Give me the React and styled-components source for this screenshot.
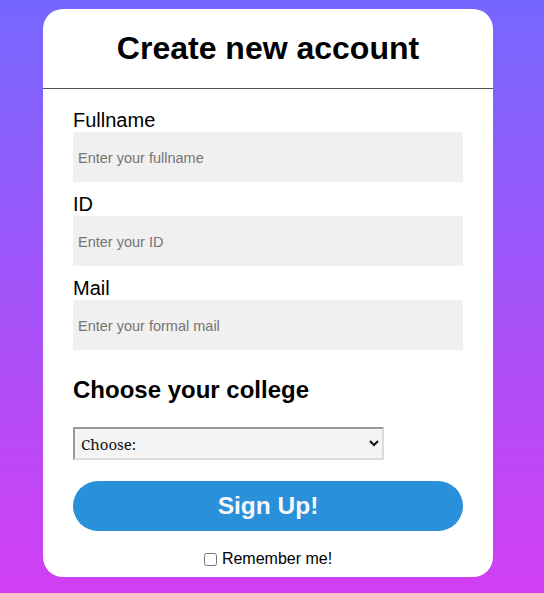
import React from "react";
import styled, { createGlobalStyle } from "styled-components";

const GlobalStyle = createGlobalStyle`
  html, body {
    margin: 0;
    padding: 0;
    min-height: 100%;
  }
  body {
    font-family: "Liberation Sans", Arial, sans-serif;
    background: linear-gradient(180deg, #7567fe 0%, #d23ff3 100%);
    background-attachment: fixed;
    min-height: 100vh;
  }
`;

const Page = styled.div`
  min-height: 100vh;
  display: flex;
  justify-content: center;
  align-items: flex-start;
  padding: 9px 8px 0 0;
  box-sizing: border-box;
`;

const Card = styled.div`
  width: 450px;
  background: #fff;
  border-radius: 20px;
  overflow: hidden;
`;

const Header = styled.div`
  padding: 21px 0;
  border-bottom: 1px solid #555;
  text-align: center;
`;

const Title = styled.h1`
  margin: 0;
  font-size: 32px;
  font-weight: bold;
  line-height: 37px;
  color: #000;
`;

const Form = styled.form`
  padding: 20px 30px 9px;
  display: flex;
  flex-direction: column;
`;

const Field = styled.div`
  display: flex;
  flex-direction: column;
  margin-bottom: ${(p) => p.$gap || 11}px;
`;

const Label = styled.label`
  font-size: 20px;
  line-height: 23px;
  color: #000;
`;

const Input = styled.input`
  height: 50px;
  box-sizing: border-box;
  border: none;
  outline: none;
  background: #f0f0f0;
  padding: 2px 5px 0;
  font-family: "Liberation Sans", Arial, sans-serif;
  font-size: 14.5px;
  color: #222;
  &::placeholder {
    color: #757575;
  }
`;

const Subtitle = styled.h2`
  margin: 15px 0 23px;
  font-size: 24px;
  font-weight: bold;
  line-height: 28px;
  color: #000;
`;

const Select = styled.select`
  width: 311px;
  height: 33px;
  box-sizing: border-box;
  border-style: solid;
  border-width: 2px;
  border-color: #9a9a9a #dcdcdc #dcdcdc #9a9a9a;
  background: #f4f4f4;
  padding: 0 2px;
  font-family: "Noto Serif", "DejaVu Serif", serif;
  font-size: 15px;
  color: #111;
  margin-bottom: 21px;
`;

const SubmitButton = styled.button`
  height: 50px;
  border: none;
  border-radius: 25px;
  background: #2a90da;
  color: #f4f8fc;
  font-family: "Liberation Sans", Arial, sans-serif;
  font-size: 24.5px;
  font-weight: bold;
  cursor: pointer;
  margin-bottom: 19px;
`;

const Remember = styled.label`
  display: flex;
  justify-content: center;
  align-items: center;
  font-size: 16px;
  line-height: 18px;
  color: #000;
`;

const Check = styled.input`
  width: 13px;
  height: 13px;
  margin: 0 5px 0 0;
`;

export default function App() {
  return (
    <>
      <GlobalStyle />
      <Page>
        <Card>
          <Header>
            <Title>Create new account</Title>
          </Header>
          <Form onSubmit={(e) => e.preventDefault()}>
            <Field>
              <Label htmlFor="fullname">Fullname</Label>
              <Input id="fullname" type="text" placeholder="Enter your fullname" />
            </Field>
            <Field>
              <Label htmlFor="uid">ID</Label>
              <Input id="uid" type="text" placeholder="Enter your ID" />
            </Field>
            <Field $gap={0}>
              <Label htmlFor="mail">Mail</Label>
              <Input id="mail" type="email" placeholder="Enter your formal mail" />
            </Field>
            <Subtitle>Choose your college</Subtitle>
            <div>
              <Select defaultValue="">
                <option value="">Choose:</option>
                <option value="eng">Engineering</option>
                <option value="sci">Science</option>
                <option value="art">Arts</option>
              </Select>
            </div>
            <SubmitButton type="submit">Sign Up!</SubmitButton>
            <Remember>
              <Check type="checkbox" />
              Remember me!
            </Remember>
          </Form>
        </Card>
      </Page>
    </>
  );
}
